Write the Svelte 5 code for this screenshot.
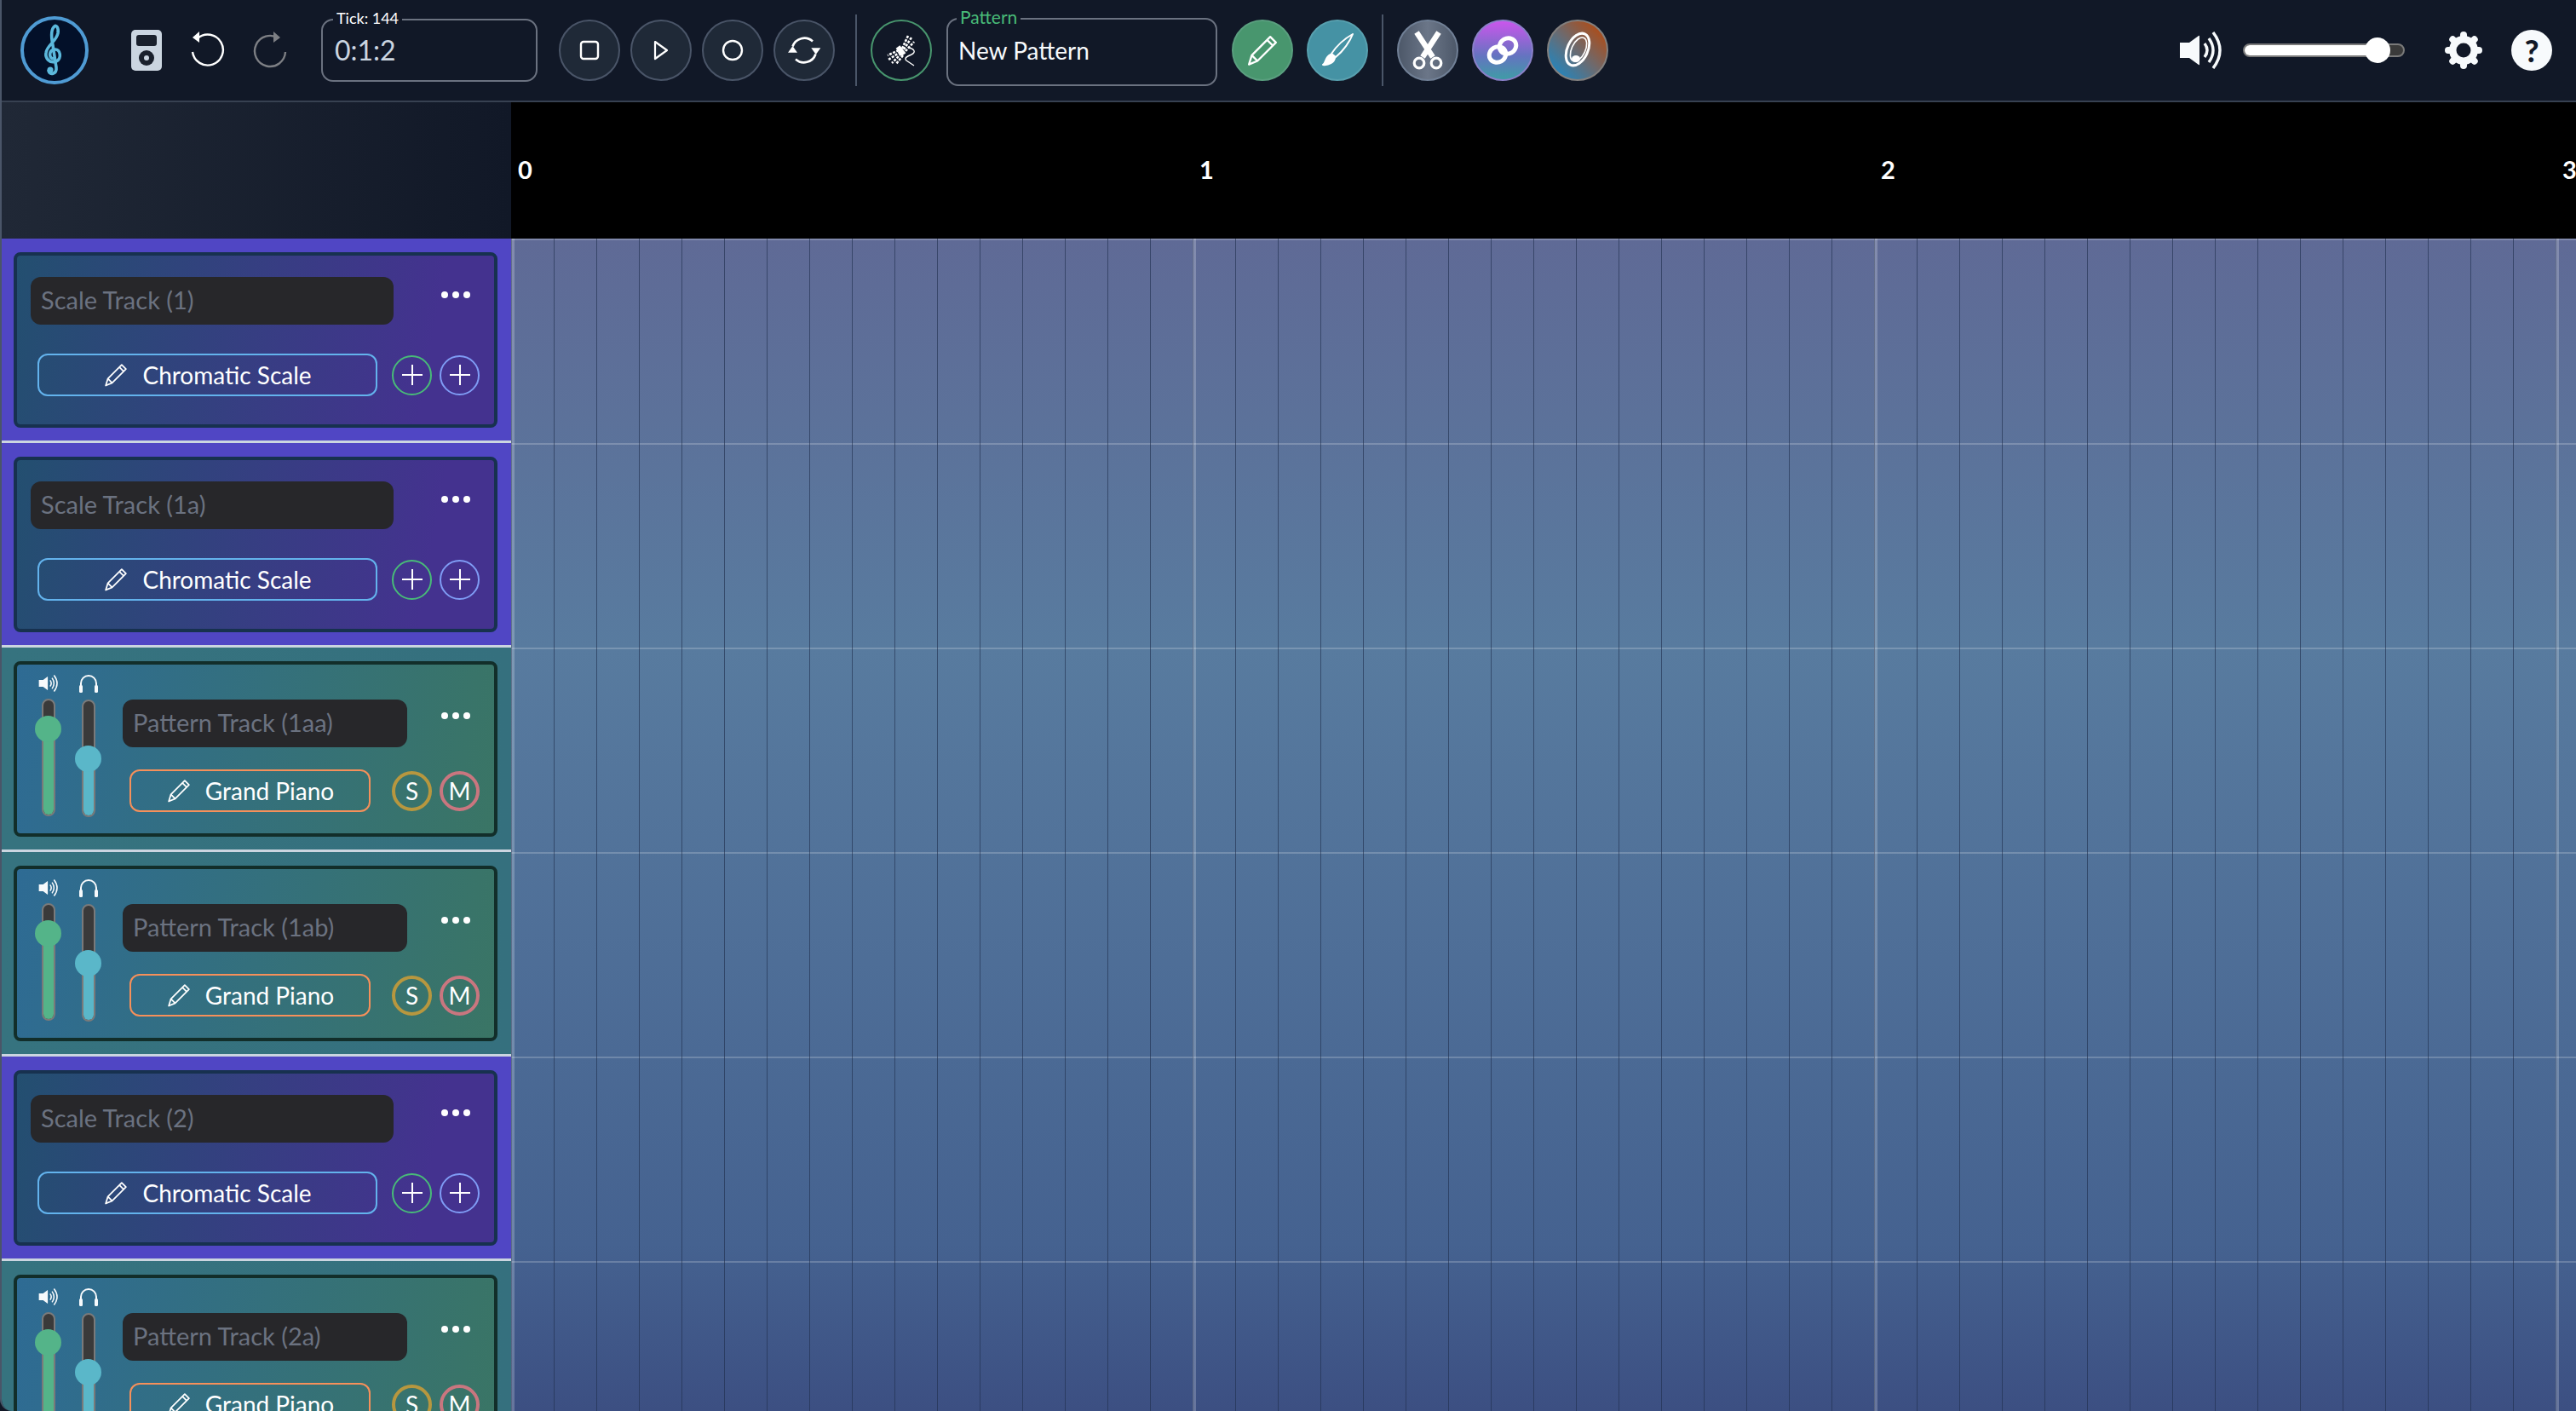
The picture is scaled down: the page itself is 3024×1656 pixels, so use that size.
<script lang="ts">
  // Track list drives the left column; slider values are 0..1
  const tracks = [
    { kind: 'scale', name: 'Scale Track (1)' },
    { kind: 'scale', name: 'Scale Track (1a)' },
    { kind: 'pattern', name: 'Pattern Track (1aa)' },
    { kind: 'pattern', name: 'Pattern Track (1ab)' },
    { kind: 'scale', name: 'Scale Track (2)' },
    { kind: 'pattern', name: 'Pattern Track (2a)' }
  ];
  const measures = [0, 1, 2, 3];
  const volume = 0.75;
  const pan = 0.5;
  const gearTeeth = [0, 45, 90, 135, 180, 225, 270, 315];
  const masterVolume = 0.84;
</script>

{#snippet pencil(size)}
  <svg width={size} height={size} viewBox="0 0 24 24" fill="none" stroke="currentColor" stroke-width="1.4" stroke-linejoin="round">
    <path d="M2.5 22 L4.5 15.5 L17.5 2.5 L21.5 6.5 L8.5 19.5 Z M15.3 4.7 L19.3 8.7 M4.5 15.5 L8.5 19.5"></path>
  </svg>
{/snippet}

{#snippet speaker(w, h)}
  <svg width={w} height={h} viewBox="0 0 50 44" fill="none" stroke="#f7fafc">
    <path d="M0 13 H11 L22 5 Q23 4 23 6 V38 Q23 40 22 39 L11 31 H0 Z" fill="#f7fafc" stroke="none"></path>
    <path d="M29 14 Q35 22 29 30" stroke-width="3.4"></path>
    <path d="M34 8 Q44 22 34 36" stroke-width="3.4"></path>
    <path d="M39 1 Q55 22 39 43" stroke-width="3.4"></path>
  </svg>
{/snippet}

<div class="app">
  <header class="toolbar">
    <button class="logo" aria-label="Home">
      <svg width="72" height="72" viewBox="4 4 72 72" fill="none" stroke="#5bb8dc" stroke-width="3.6" stroke-linecap="round">
        <path d="M39 50 C33 50 33 40 40 39 C47 38 49 50 42 53 C34 56 29 49 30 43 C31 34 42 30 44 20 C45 13 42 10 40 12 C36 15 36 24 38 34 L42 60 C43 68 34 70 33 64"></path>
        <circle cx="35" cy="63" r="3.5" fill="#5bb8dc" stroke="none"></circle>
      </svg>
    </button>

    <svg class="ipod" width="36" height="48" viewBox="0 0 36 48">
      <rect width="36" height="48" rx="5" fill="#cbd5e0"></rect>
      <rect x="6" y="6" width="24" height="13" rx="3" fill="#1a202c"></rect>
      <circle cx="18" cy="33" r="9" fill="#1a202c"></circle>
      <circle cx="18" cy="33" r="3" fill="#cbd5e0"></circle>
    </svg>

    <svg class="undo" width="40" height="44" viewBox="0 0 40 44" fill="none" stroke="#fff" stroke-width="2.4">
      <path d="M8 8 A18 18 0 1 1 2 24"></path>
      <path d="M10 0 L2 7 L10 13 Z" fill="#fff" stroke="none"></path>
    </svg>
    <svg class="redo" width="40" height="44" viewBox="0 0 40 44" fill="none" stroke="#7d7f84" stroke-width="2.4">
      <path d="M30 8 A18 18 0 1 0 38 24"></path>
      <path d="M24 0 L32 7 L24 13 Z" fill="#7d7f84" stroke="none"></path>
    </svg>

    <fieldset class="field tick">
      <legend>Tick: 144</legend>
      <span>0:1:2</span>
    </fieldset>

    <div class="transport">
      <button class="round" aria-label="Stop">
        <svg width="24" height="24" viewBox="0 0 24 24" fill="none" stroke="#fff" stroke-width="2.4"><rect x="2" y="2" width="20" height="20" rx="3"></rect></svg>
      </button>
      <button class="round" aria-label="Play">
        <svg width="20" height="24" viewBox="0 0 20 24" fill="none" stroke="#fff" stroke-width="2.2" stroke-linejoin="round"><path d="M3 2 L17 12 L3 22 Z"></path></svg>
      </button>
      <button class="round" aria-label="Record">
        <svg width="26" height="26" viewBox="0 0 26 26" fill="none" stroke="#fff" stroke-width="2.4"><circle cx="13" cy="13" r="11"></circle></svg>
      </button>
      <button class="round" aria-label="Loop">
        <svg width="40" height="40" viewBox="0 0 40 40" fill="none" stroke="#fff" stroke-width="2.6">
          <path d="M6.500 15.500 A14.500 14.500 0 0 1 30 9.500"></path>
          <path d="M33.500 24.500 A14.500 14.500 0 0 1 10 30.500"></path>
          <path d="M1 22.700 H12 L6.500 15 Z" fill="#fff" stroke="none"></path>
          <path d="M28.300 17.300 H39.300 L33.800 25 Z" fill="#fff" stroke="none"></path>
        </svg>
      </button>
    </div>

    <span class="divider first"></span>

    <button class="round yarn" aria-label="Patterns">
      <svg width="38" height="38" viewBox="0 0 38 38" fill="none" stroke="#fff">
        <g stroke-width="2.6" stroke-dasharray="3 1.500">
          <path d="M20 17 L27 2 M22 18 L31 4 M24 20 L34 9"></path>
          <path d="M16 19 L3 25 M18 21 L4 30 M19 23 L8 34 M21 25 L13 35"></path>
        </g>
        <path d="M15 15 L22 24" stroke-width="6"></path>
        <path d="M27 16 C34 17 37 21 31 24 C26 26 22 28 25 31 L34 37" stroke-width="1.400"></path>
      </svg>
    </button>

    <fieldset class="field pattern-field">
      <legend>Pattern</legend>
      <span>New Pattern</span>
    </fieldset>

    <div class="tools">
      <button class="round pencil" aria-label="Pencil">{@render pencil(40)}</button>
      <button class="round brush" aria-label="Brush">
        <svg width="40" height="40" viewBox="0 0 40 40" fill="none" stroke="#fff" stroke-width="2" stroke-linejoin="round">
          <path d="M38 1 C35 9 27 21 18 28 L13 24 C19 15 29 6 38 1 Z"></path>
          <path d="M12 25 L17 29 C16 34 10 38 3 37 C7 35 5 28 12 25 Z" fill="#fff"></path>
        </svg>
      </button>
    </div>

    <span class="divider"></span>

    <div class="tools">
      <button class="round scissors" aria-label="Cut">
        <svg width="36" height="46" viewBox="0 0 36 46" fill="none" stroke="#fff">
          <path d="M5 2 L24 31 M31 2 L12 31" stroke-width="6.500"></path>
          <circle cx="8" cy="38" r="5.800" stroke-width="3.200"></circle>
          <circle cx="28" cy="38" r="5.800" stroke-width="3.200"></circle>
        </svg>
      </button>
      <button class="round link" aria-label="Link">
        <svg width="38" height="38" viewBox="0 0 38 38" fill="none" stroke="#fff">
          <ellipse cx="25" cy="14" rx="10" ry="9" stroke-width="5" transform="rotate(-30 25 14)"></ellipse>
          <ellipse cx="13" cy="24" rx="10" ry="9" stroke-width="5" transform="rotate(-30 13 24)"></ellipse>
        </svg>
      </button>
      <button class="round spiral" aria-label="Transpose">
        <svg width="40" height="44" viewBox="0 0 40 44" fill="none" stroke="#fff" stroke-linecap="round">
          <ellipse cx="20" cy="21" rx="12" ry="20" stroke-width="3" transform="rotate(25 20 21)"></ellipse>
          <ellipse cx="21" cy="21" rx="8" ry="15" stroke-width="1.600" transform="rotate(25 21 21)"></ellipse>
          <ellipse cx="18" cy="32" rx="5" ry="4" fill="#fff" stroke="none"></ellipse>
        </svg>
      </button>
    </div>

    <div class="right">
      {@render speaker(50, 44)}
      <div class="master">
        <div class="master-fill" style="width: {masterVolume * 100}%"></div>
        <div class="master-thumb" style="left: {masterVolume * 100}%"></div>
      </div>
      <svg class="gear" width="48" height="48" viewBox="0 0 48 48">
        <circle cx="24" cy="24" r="17" fill="#f7fafc"></circle>
        {#each gearTeeth as deg}
          <line x1="24" y1="6" x2="24" y2="10" stroke="#f7fafc" stroke-width="8" stroke-linecap="round" transform="rotate({deg} 24 24)"></line>
        {/each}
        <circle cx="24" cy="24" r="8.500" fill="#111827"></circle>
      </svg>
      <span class="help">?</span>
    </div>
  </header>

  <main class="editor">
    <div class="corner"></div>
    <div class="ruler">
      {#each measures as m}
        <span class="measure">{m}</span>
      {/each}
    </div>

    <aside class="tracks">
      {#each tracks as track}
        <div class="row {track.kind}">
          <div class="card">
            {#if track.kind === 'pattern'}
              <div class="mixer">
                <div class="channel">
                  {@render speaker(24, 20)}
                  <div class="fader">
                    <div class="fader-fill green" style="height: {volume * 100}%"></div>
                    <div class="fader-thumb green" style="top: {(1 - volume) * 100}%"></div>
                  </div>
                </div>
                <div class="channel">
                  <svg width="22" height="21" viewBox="0 0 22 21" fill="none" stroke="#f7fafc" stroke-width="2">
                    <path d="M2 14 V10 A9 9 0 0 1 20 10 V14"></path>
                    <rect x="0" y="12" width="4" height="9" rx="1.500" fill="#f7fafc" stroke="none"></rect>
                    <rect x="18" y="12" width="4" height="9" rx="1.500" fill="#f7fafc" stroke="none"></rect>
                  </svg>
                  <div class="fader">
                    <div class="fader-fill teal" style="height: {pan * 100}%"></div>
                    <div class="fader-thumb teal" style="top: {(1 - pan) * 100}%"></div>
                  </div>
                </div>
              </div>
            {/if}
            <div class="main">
              <div class="name-row">
                <div class="name">{track.name}</div>
                <div class="dots"><i></i><i></i><i></i></div>
              </div>
              <div class="btn-row">
                <button class="instrument">
                  {@render pencil(30)}
                  {track.kind === 'scale' ? 'Chromatic Scale' : 'Grand Piano'}
                </button>
                <div class="circles">
                  {#if track.kind === 'scale'}
                    <button class="mini add-a" aria-label="Add pattern track"><b></b></button>
                    <button class="mini add-b" aria-label="Add scale track"><b></b></button>
                  {:else}
                    <button class="mini solo">S</button>
                    <button class="mini mute">M</button>
                  {/if}
                </div>
              </div>
            </div>
          </div>
        </div>
      {/each}
    </aside>

    <div class="grid"></div>
  </main>
</div>

<style>
  :global(body) {
    margin: 0;
    background: #111827;
    overflow: hidden;
  }

  .app {
    box-sizing: border-box;
    width: 3024px;
    height: 1656px;
    display: flex;
    flex-direction: column;
    overflow: hidden;
    border-left: 2px solid #4a5568;
    border-bottom-left-radius: 14px;
    font-family: 'Lato', 'Noto Sans', sans-serif;
    color: #fff;
    background: #111827;
  }

  button {
    font-family: inherit;
    color: #fff;
    padding: 0;
    cursor: pointer;
  }

  .toolbar {
    box-sizing: border-box;
    flex: 0 0 120px;
    display: flex;
    align-items: center;
    padding-left: 22px;
    background: #111827;
    border-bottom: 2px solid #374151;
  }

  .logo {
    width: 80px;
    height: 80px;
    box-sizing: border-box;
    border-radius: 50%;
    border: 4px solid #4f9bd4;
    background: #031029;
    display: flex;
    align-items: center;
    justify-content: center;
    flex-shrink: 0;
  }

  .ipod {
    margin-left: 50px;
    flex-shrink: 0;
  }

  .undo {
    margin-left: 34px;
  }

  .redo {
    margin-left: 33px;
  }

  .field {
    box-sizing: border-box;
    margin: 0;
    border: 2px solid #6b7280;
    border-radius: 14px;
    display: flex;
    align-items: center;
    flex-shrink: 0;
  }

  .field legend {
    position: relative;
    top: -2px;
    padding: 0 4px;
    line-height: 1;
  }

  .tick {
    width: 254px;
    height: 82px;
    margin-left: 40px;
    margin-top: -8px;
    padding: 0 14px 10px;
    color: #cbd5e0;
    font-size: 32px;
  }

  .tick legend {
    font-size: 18px;
    color: #fff;
    margin-left: -2px;
  }

  .pattern-field {
    width: 318px;
    height: 90px;
    margin-left: 17px;
    margin-top: -6px;
    padding: 0 12px 13px;
    color: #f7fafc;
    font-size: 28px;
  }

  .pattern-field legend {
    font-size: 21px;
    color: #48bb78;
    margin-left: -2px;
  }

  .transport {
    display: flex;
    gap: 12px;
    margin-left: 25px;
  }

  .round {
    box-sizing: border-box;
    width: 72px;
    height: 72px;
    border-radius: 50%;
    border: 2px solid #4a5568;
    background: #1f2937;
    display: flex;
    align-items: center;
    justify-content: center;
    flex-shrink: 0;
  }

  .divider {
    width: 2px;
    height: 84px;
    background: #4a5568;
    flex-shrink: 0;
    margin-left: 16px;
  }

  .divider.first {
    margin-left: 24px;
  }

  .yarn {
    background: transparent;
    border-color: #48966e;
    margin-left: 16px;
  }

  .tools {
    display: flex;
    gap: 16px;
    margin-left: 17px;
  }

  .pencil {
    background: #48966e;
    border-color: #5a9f7f;
  }

  .brush {
    background: #4592a4;
    border-color: #58a0af;
  }

  .divider + .tools {
    margin-left: 16px;
  }

  .scissors {
    background: linear-gradient(90deg, #4d5869, #6b7688 50%, #4d5869);
    border-color: #718096;
  }

  .link {
    background: linear-gradient(180deg, #ca56ec, #6474c0 60%, #3f9ca6);
    border-color: #8a80c8;
  }

  .spiral {
    background: linear-gradient(45deg, #2c82b4 15%, #6d6a6e 50%, #a84f20 85%);
    border-color: #83807f;
  }

  .right {
    margin-left: auto;
    display: flex;
    align-items: center;
    padding-right: 28px;
  }

  .master {
    position: relative;
    box-sizing: border-box;
    width: 190px;
    height: 16px;
    margin-left: 24px;
    background: #3a3a3a;
    border: 2px solid #7a7a7a;
    border-radius: 8px;
  }

  .master-fill {
    height: 100%;
    border-radius: 6px;
    background: #fff;
  }

  .master-thumb {
    position: absolute;
    top: 50%;
    width: 30px;
    height: 30px;
    margin: -15px 0 0 -15px;
    border-radius: 50%;
    background: #fff;
  }

  .gear {
    margin-left: 45px;
  }

  .help {
    width: 48px;
    height: 48px;
    margin-left: 32px;
    border-radius: 50%;
    background: #f7fafc;
    color: #111827;
    font-size: 36px;
    font-weight: 900;
    line-height: 48px;
    text-align: center;
  }

  .editor {
    flex: 1;
    min-height: 0;
    display: grid;
    grid-template-columns: 598px 1fr;
    grid-template-rows: 160px 1fr;
  }

  .corner {
    background: linear-gradient(90deg, #202836, #111827);
  }

  .ruler {
    background: #000;
    display: flex;
    overflow: hidden;
    align-items: center;
    padding-bottom: 4px;
    box-sizing: border-box;
  }

  .measure {
    flex: 0 0 800px;
    box-sizing: border-box;
    padding-left: 8px;
    font-size: 29px;
    font-weight: 700;
  }

  .tracks {
    overflow: hidden;
  }

  .row {
    box-sizing: border-box;
    height: 240px;
    padding: 16px 14px 0;
    border-bottom: 3px solid #cbd5e0;
  }

  .row.scale {
    background: #5046c4;
  }

  .row.pattern {
    background: linear-gradient(90deg, #36737f, #35707e);
  }

  .card {
    box-sizing: border-box;
    width: 568px;
    height: 206px;
    border-radius: 8px;
    border: 4px solid;
    display: flex;
  }

  .scale .card {
    border-color: #17314f;
    background: linear-gradient(100deg, #234f70, #44328f 85%);
  }

  .pattern .card {
    border-color: #122e2a;
    background: linear-gradient(100deg, #2e6b94, #3a7565);
  }

  .mixer {
    display: flex;
    gap: 16px;
    padding: 12px 0 0 21px;
  }

  .channel {
    width: 31px;
    display: flex;
    flex-direction: column;
    align-items: center;
    gap: 8px;
  }

  .fader {
    position: relative;
    box-sizing: border-box;
    width: 16px;
    height: 138px;
    background: #3a3a3a;
    border: 2px solid #7a7a7a;
    border-radius: 8px;
    display: flex;
    align-items: flex-end;
  }

  .fader-fill {
    width: 100%;
    border-radius: 0 0 6px 6px;
  }

  .fader-thumb {
    position: absolute;
    left: 50%;
    width: 31px;
    height: 31px;
    margin: -15.5px 0 0 -15.5px;
    border-radius: 50%;
  }

  .green {
    background: #54b489;
  }

  .teal {
    background: #5ab7c9;
  }

  .main {
    flex: 1;
    min-width: 0;
    display: flex;
    flex-direction: column;
    padding: 25px 17px 0 16px;
  }

  .pattern .main {
    padding-left: 25px;
    padding-top: 41px;
  }

  .name-row {
    display: flex;
    align-items: flex-start;
    justify-content: space-between;
  }

  .name {
    box-sizing: border-box;
    width: 426px;
    height: 56px;
    padding-left: 12px;
    border-radius: 12px;
    background: #27272a;
    color: #6b7280;
    font-size: 29px;
    line-height: 54px;
    white-space: nowrap;
  }

  .pattern .name {
    width: 334px;
  }

  .dots {
    display: flex;
    gap: 5px;
    margin: 17px 11px 0 0;
  }

  .pattern .dots {
    margin-top: 15px;
  }

  .dots i {
    width: 8px;
    height: 8px;
    border-radius: 50%;
    background: #fff;
  }

  .btn-row {
    display: flex;
    align-items: center;
    justify-content: space-between;
    margin-top: 34px;
  }

  .pattern .btn-row {
    margin-top: 26px;
  }

  .instrument {
    box-sizing: border-box;
    width: 399px;
    height: 50px;
    margin-left: 8px;
    border: 2px solid #63b3ed;
    border-radius: 12px;
    background: transparent;
    font-size: 28px;
    display: flex;
    align-items: center;
    justify-content: center;
    gap: 16px;
  }

  .pattern .instrument {
    width: 283px;
    border-color: #f6905a;
  }

  .circles {
    display: flex;
    gap: 9px;
  }

  .mini {
    box-sizing: border-box;
    width: 47px;
    height: 47px;
    border-radius: 50%;
    background: transparent;
    font-size: 28px;
    display: flex;
    align-items: center;
    justify-content: center;
  }

  .add-a {
    border: 2px solid #48bb78;
  }

  .add-b {
    border: 2px solid #7f9cf5;
  }

  .mini b {
    display: block;
    width: 24px;
    height: 24px;
    background:
      linear-gradient(#fff, #fff) center / 100% 2px no-repeat,
      linear-gradient(#fff, #fff) center / 2px 100% no-repeat;
  }

  .solo {
    border: 4px solid #b7973f;
  }

  .mute {
    border: 4px solid #c9767f;
  }

  .grid {
    background:
      repeating-linear-gradient(90deg, rgba(255, 255, 255, 0.22) 0 4px, transparent 4px 800px),
      repeating-linear-gradient(90deg, rgba(30, 45, 75, 0.6) 0 1px, transparent 1px 50px),
      repeating-linear-gradient(180deg, rgba(255, 255, 255, 0.2) 0 2px, transparent 2px 240px),
      linear-gradient(180deg, #5f6a96 0, #587b9f 480px, #456290 1180px, #3c4f82 1376px);
  }
</style>
